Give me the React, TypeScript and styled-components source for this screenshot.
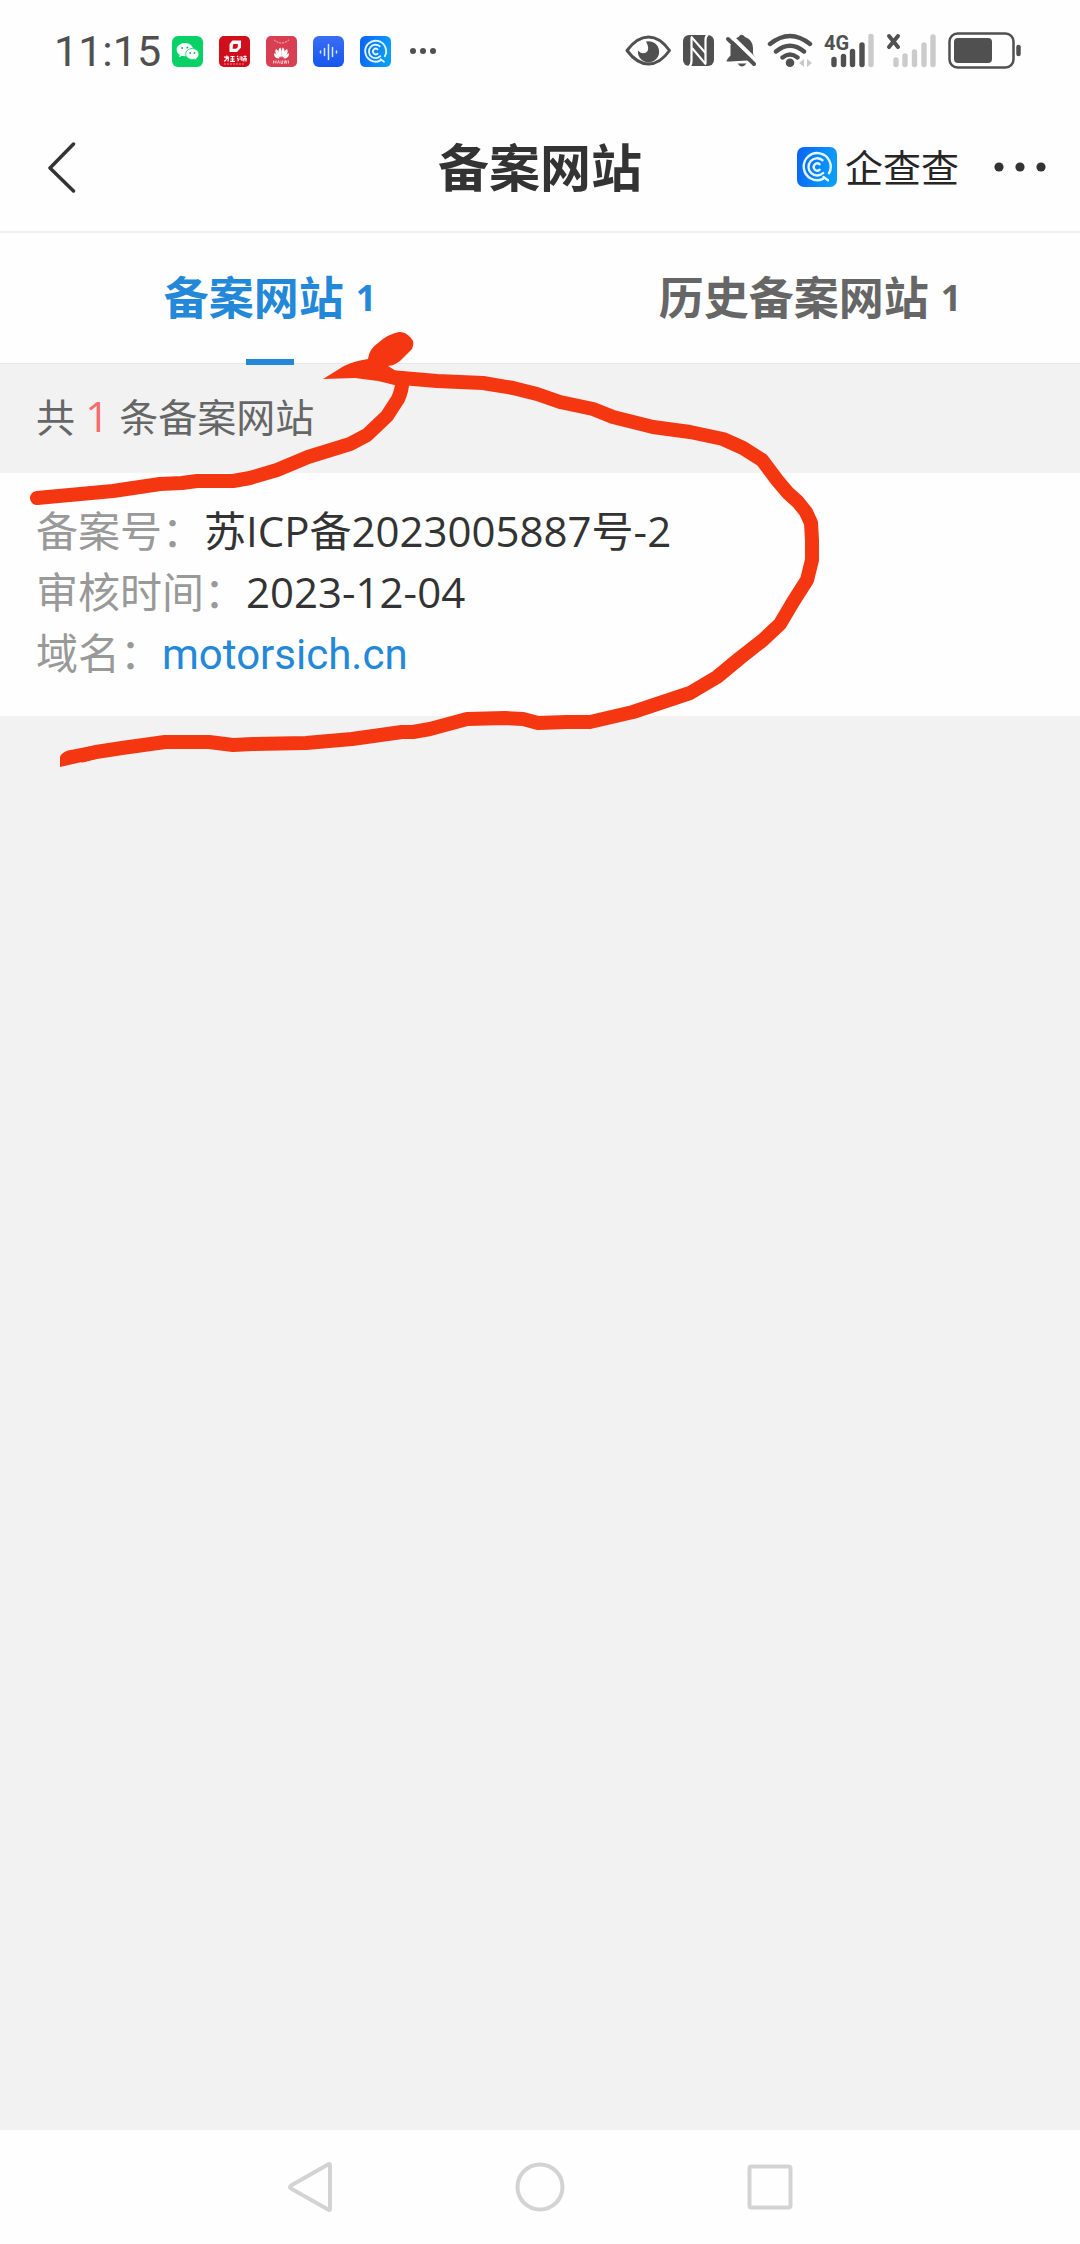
import React from "react";
import styled, { createGlobalStyle } from "styled-components";

const sans = '"Open Sans", "Noto Sans CJK SC", sans-serif';

const GlobalStyle = createGlobalStyle`
  * { box-sizing: border-box; }
  body { margin: 0; background: #f2f2f2; }
  button { margin: 0; padding: 0; border: 0; background: none; font: inherit; color: inherit; cursor: pointer; }
  svg { display: block; flex: none; }
`;

const Screen = styled.div`
  position: relative;
  display: flex;
  flex-direction: column;
  min-height: 100vh;
  overflow: hidden;
  background: #f2f2f2;
  color: #333;
  font-family: ${sans};
`;

const StatusBar = styled.div`
  display: flex;
  align-items: center;
  justify-content: space-between;
  height: 102px;
  padding: 0 58px 0 54px;
  background: #fefefe;
  color: #505050;
`;

const StatusGroup = styled.div`
  display: flex;
  align-items: center;
  gap: 16px;
`;

const Clock = styled.time`
  margin-right: -5px;
  font-family: Roboto, sans-serif;
  font-size: 43px;
  line-height: 52px;
`;

const Header = styled.header`
  display: grid;
  grid-template-columns: 1fr auto 1fr;
  align-items: center;
  height: 131px;
  padding: 0 33px;
  border-bottom: 2px solid #f0f0f0;
  background: #fefefe;
`;

const IconButton = styled.button`
  display: flex;
  align-items: center;
  justify-content: center;
  justify-self: start;
  height: 60px;
`;

const Title = styled.h1`
  margin: 0;
  font-size: 51px;
  line-height: 60px;
  font-weight: 700;
`;

const HeaderActions = styled.div`
  display: flex;
  align-items: center;
  justify-self: end;
  gap: 34px;
`;

const Brand = styled.div`
  display: flex;
  align-items: center;
  gap: 8px;
  font-size: 38px;
  line-height: 60px;
  color: #262626;
`;

const Tabs = styled.nav`
  display: grid;
  grid-template-columns: 1fr 1fr;
  height: 131px;
  border-bottom: 1px solid #e6e6e6;
  background: #fefefe;
`;

const Tab = styled.button<{ $active?: boolean }>`
  position: relative;
  display: flex;
  align-items: center;
  justify-content: center;
  gap: 12px;
  font-size: 45px;
  line-height: 60px;
  font-weight: 700;
  color: ${(p) => (p.$active ? "#2388d8" : "#666")};

  &::after {
    content: "";
    display: ${(p) => (p.$active ? "block" : "none")};
    position: absolute;
    left: 50%;
    bottom: -2px;
    width: 48px;
    height: 6px;
    margin-left: -24px;
    background: #2388d8;
  }
`;

const TabCount = styled.span`
  font-size: 36px;
`;

const Main = styled.main`
  flex: 1;
`;

const Summary = styled.p`
  margin: 0;
  padding: 22px 36px 26px;
  font-size: 39px;
  line-height: 61px;
  color: #666;
`;

const SummaryCount = styled.span`
  font-size: 42px;
  line-height: 1;
  color: #f56c6c;
`;

const Card = styled.dl`
  margin: 0;
  padding: 27px 36px 33px;
  background: #fefefe;
  font-size: 42px;
  line-height: 61px;
`;

const Row = styled.div`
  display: flex;
`;

const Label = styled.dt`
  color: #999;
`;

const Value = styled.dd`
  margin: 0;
`;

const DomainLink = styled.a`
  font-family: Roboto, sans-serif;
  line-height: 1;
  color: #2388d8;
  text-decoration: none;
`;

const NavBar = styled.nav`
  display: grid;
  grid-template-columns: repeat(3, 1fr);
  height: 114px;
  padding: 0 18%;
  background: #fefefe;
`;

const NavButton = styled.button`
  display: flex;
  align-items: center;
  justify-content: center;
`;

const Markup = styled.svg`
  position: absolute;
  left: 0;
  top: 320px;
  pointer-events: none;
`;

function QccLogo({ size, id }: { size: number; id: string }) {
  return (
    <svg width={size} height={size} viewBox="0 0 40 40">
      <defs>
        <linearGradient id={id} x1="0" y1="0" x2="1" y2="0.2">
          <stop offset="0" stopColor="#0a62f5" />
          <stop offset="1" stopColor="#0b9df8" />
        </linearGradient>
      </defs>
      <rect width="40" height="40" rx="7" fill={`url(#${id})`} />
      <g fill="none" stroke="#e4f5ff" strokeWidth="2.4" strokeLinecap="round">
        <path d="M26 31.800A13.500 13.500 0 1 1 32 26.200" />
        <path d="M26.200 26A8.600 8.600 0 1 1 25.500 13.200" />
        <path d="M22.600 22.800A3.600 3.600 0 1 1 22.600 17.200" />
        <path d="M26.500 30L31 33.200" />
      </g>
    </svg>
  );
}

function WeChatIcon() {
  return (
    <svg width="31" height="31" viewBox="0 0 31 31">
      <rect width="31" height="31" rx="6" fill="#08d166" />
      <path d="M13 7c-4.700 0-8.300 3-8.300 6.700 0 2.100 1.200 3.900 3 5.100l-.7 2.400 2.900-1.400c1 .3 2 .4 3.100.4 4.600 0 8.200-3 8.200-6.500S17.600 7 13 7z" fill="#fff" />
      <path d="M20.300 12.500c-3.700 0-6.600 2.500-6.600 5.500s2.900 5.500 6.600 5.500c.8 0 1.600-.1 2.300-.3l2.400 1.300-.6-2c1.600-1 2.600-2.600 2.600-4.500 0-3-3-5.500-6.700-5.500z" fill="#fff" stroke="#08d166" strokeWidth=".8" />
      <g fill="#08b458">
        <circle cx="10.200" cy="12" r="1" /><circle cx="15.400" cy="11.500" r="1" />
        <circle cx="18.200" cy="17" r=".9" /><circle cx="22.400" cy="17" r=".9" />
      </g>
    </svg>
  );
}

function RedAppIcon() {
  return (
    <svg width="31" height="31" viewBox="0 0 31 31">
      <rect width="31" height="31" rx="5" fill="#d10f1c" />
      <path d="M13.500 4.500h8.500v7l-4 4.500h-7.500V8z" fill="#fff" />
      <path d="M14.300 8h4.500v3.200l-1.800 1.600h-3.500z" fill="#d10f1c" />
      <path d="M5 21.200h5M8 19.500l-.5 2q0 3-2.500 3.800M7.500 22.300h2l-.5 3M11.500 20.500h4M13.500 20v5M11.500 23h4M11 25.300h5M18 20l1 1M18 22.500l1.200.2v2.500M20.500 21h2.500v4M20.300 23h2.500M24.300 20.500h3.200M26 19.500v3M24 22.800h4M24.800 23.500v2M27 23.500v2" stroke="#fff" strokeWidth="1.200" fill="none" />
      <path d="M5 28h21" stroke="#f2a0a5" strokeWidth=".8" strokeDasharray="2 1" />
    </svg>
  );
}

function FlowerAppIcon() {
  return (
    <svg width="31" height="31" viewBox="0 0 31 31">
      <rect width="31" height="31" rx="5" fill="#d93f52" />
      <path d="M8 3.800q7.500 6.500 15 0" fill="none" stroke="#f6bcc4" strokeWidth="1" strokeDasharray="2 1" />
      <g fill="#fff">
        <path d="M15.200 21.500c-3-3-4-7.500-1-10 1.600 2 1.600 6.500 1 10z" />
        <path d="M15.800 21.500c3-3 4-7.500 1-10-1.600 2-1.600 6.500-1 10z" />
        <path d="M14.300 21.500c-4.300-1.700-6-5.500-4.300-8.500 2.800 1.500 4.300 5 4.300 8.500zM16.700 21.500c4.300-1.700 6-5.500 4.300-8.500-2.800 1.500-4.300 5-4.300 8.500z" />
        <path d="M13.600 22.300c-3.500.6-5.800-1.500-5.600-5 2.600.5 4.800 2.500 5.600 5zM17.400 22.300c3.500.6 5.800-1.500 5.600-5-2.600.5-4.800 2.500-5.600 5z" />
      </g>
      <path d="M7.500 24.500v3M10 24.500v3M7.500 26H10M11.500 27.500l1-3 1 3M15 24.500v3h1.500v-3M18 24.500l.7 3 .8-3 .8 3 .7-3M22.500 24.500v3" stroke="#fbd9dd" strokeWidth=".8" fill="none" />
    </svg>
  );
}

function VoiceAppIcon() {
  return (
    <svg width="31" height="31" viewBox="0 0 31 31">
      <defs>
        <linearGradient id="voice" x1="0" y1="0" x2="0" y2="1">
          <stop offset="0" stopColor="#3a6df5" />
          <stop offset="1" stopColor="#1557ee" />
        </linearGradient>
      </defs>
      <rect width="31" height="31" rx="6" fill="url(#voice)" />
      <path d="M7.500 15v2M11.500 12.500v7M15.500 8.500v15M19.500 11.500v9M23.500 15v2" stroke="#dbe8ff" strokeWidth="1.500" strokeLinecap="round" />
    </svg>
  );
}

function Dots({ width, r, gap, color }: { width: number; r: number; gap: number; color: string }) {
  const c = width / 2;
  return (
    <svg width={width} height="12" viewBox={`0 0 ${width} 12`} fill={color}>
      <circle cx={c - gap} cy="6" r={r} />
      <circle cx={c} cy="6" r={r} />
      <circle cx={c + gap} cy="6" r={r} />
    </svg>
  );
}

/* The group of system indicators on the right of the status bar. */
function SystemIcons() {
  return (
    <svg width="398" height="40" viewBox="624 31 398 40" fill="none" stroke="#505050" role="img" aria-label="4G">
      <path d="M627 50.500Q637 37 648.500 37T669.500 50.500Q660 64 648.500 64T627 50.500z" strokeWidth="3" strokeLinejoin="round" />
      <path d="M646 41.500A10.600 10.600 0 1 1 638 50.500Q641 54.500 646 52.500 650.500 49.500 646 41.500z" fill="#505050" stroke="none" />

      <rect x="683" y="35" width="31" height="31" rx="6" fill="#505050" stroke="none" />
      <path d="M691.500 38V61Q691.500 65 689 66.500M705.500 63V40Q705.500 36 708 34.500" stroke="#fff" strokeWidth="2.200" />
      <path d="M691 36.500L705.500 53M692 48L706 64.500" stroke="#fff" strokeWidth="2" />

      <g fill="#505050" stroke="none">
        <path d="M730.500 45.500Q734 38 738.500 37q3-4.500 6.500 0 8 3 8 11v6q3 3 3 6l-26 1.500h-3.500q0-2 4-6z" />
        <path d="M737.500 63.500h9q-4.500 6-9 0z" />
      </g>
      <path d="M731 36l27 26.500" stroke="#fefefe" strokeWidth="4" />
      <path d="M728 39l26 25" strokeWidth="4" strokeLinecap="round" />

      <g strokeWidth="4.400" strokeLinecap="round">
        <path d="M770 44Q790 28 810 44M776 51.500Q790 40 804 51.500M782.500 57.500Q790 51.500 797.500 57.500" />
      </g>
      <circle cx="790" cy="62.800" r="4.300" fill="#505050" stroke="none" />
      <path d="M804 59v8l-5-4zM807 59v8l5-4z" fill="#c9c9c9" stroke="none" />

      <text x="824" y="50" fill="#505050" stroke="none" fontFamily="Roboto, sans-serif" fontSize="20" fontWeight="700">4G</text>
      <g strokeWidth="5.400" strokeLinecap="round">
        <path d="M834 59.500v5M843.500 56.500v8M852.500 51.500v13M862 45v19.500" />
        <path d="M871 36.500v28" stroke="#cbcbcb" />
      </g>

      <path d="M889 36l9 11M898 36l-9 11" strokeWidth="4" strokeLinecap="round" />
      <path d="M896 60v4.500M905 56v8.500M914.500 52v12.500M924 45v19.500M933 37v27.500" stroke="#cbcbcb" strokeWidth="5.400" strokeLinecap="round" />

      <rect x="949.500" y="33.500" width="64" height="34" rx="8" strokeWidth="2.500" />
      <rect x="954" y="38" width="38" height="25" rx="4" fill="#505050" stroke="none" />
      <path d="M1018.500 47v7" strokeWidth="4.500" strokeLinecap="round" />
    </svg>
  );
}

function HandDrawnLoop() {
  return (
    <Markup width="840" height="460" viewBox="0 320 840 460" aria-hidden="true">
      <g fill="none" stroke="#f53711" strokeWidth="14" strokeLinejoin="round">
        <path strokeLinecap="round" d="M37 498L113 491L160 484L182 483L197 481L233 481L250 478L277 470L308 457L350 444L367 435L387 416L398 399Q403 388 402 378" />
        <path d="M390 377L437 381L483 383L513 388L537 394L560 402L593 409L613 417L653 427L690 432L723 439L743 448L762 460L777 480L788 493L798 502L806 512L811 523L812 540L812 560L807 580L793 602L780 624L763 640L740 658L717 677L690 693L660 703L633 712L590 722L567 722L538 723L523 719L505 718L467 719L430 729L413 732L402 732L352 739L329 741L306 743L253 744L233 745L209 742L165 742L122 748L96 752L80 756" />
      </g>
      <path fill="#f53711" d="M60 767V757Q61 753 68 750.500L94 745.500L96 759L82 762zM323 379L344 366Q354 361 368 359Q369 349 378 343Q388 334 399 332Q405 331 411 338Q415 342 412 349L403 358Q397 365 388 366L396 371L402 388L395 385L378 381L355 378z" />
    </Markup>
  );
}

export default function App() {
  return (
    <Screen>
      <GlobalStyle />
      <StatusBar>
        <StatusGroup>
          <Clock>11:15</Clock>
          <WeChatIcon />
          <RedAppIcon />
          <FlowerAppIcon />
          <VoiceAppIcon />
          <QccLogo size={31} id="qccSmall" />
          <Dots width={32} r={3} gap={10} color="#505050" />
        </StatusGroup>
        <SystemIcons />
      </StatusBar>

      <Header>
        <IconButton aria-label="返回">
          <svg width="58" height="52" viewBox="0 0 58 52">
            <path d="M40.500 3L17 27l23.500 23" fill="none" stroke="#333" strokeWidth="3.500" strokeLinecap="round" strokeLinejoin="round" />
          </svg>
        </IconButton>
        <Title>备案网站</Title>
        <HeaderActions>
          <Brand>
            <QccLogo size={40} id="qccLarge" />
            <span>企查查</span>
          </Brand>
          <IconButton aria-label="更多">
            <Dots width={54} r={4.6} gap={21} color="#333" />
          </IconButton>
        </HeaderActions>
      </Header>

      <Tabs>
        <Tab $active aria-current="page">
          备案网站<TabCount>1</TabCount>
        </Tab>
        <Tab>
          历史备案网站<TabCount>1</TabCount>
        </Tab>
      </Tabs>

      <Main>
        <Summary>
          共 <SummaryCount>1</SummaryCount> 条备案网站
        </Summary>
        <Card>
          <Row>
            <Label>备案号：</Label>
            <Value>苏ICP备2023005887号-2</Value>
          </Row>
          <Row>
            <Label>审核时间：</Label>
            <Value>2023-12-04</Value>
          </Row>
          <Row>
            <Label>域名：</Label>
            <Value>
              <DomainLink href="#domain">motorsich.cn</DomainLink>
            </Value>
          </Row>
        </Card>
      </Main>

      <NavBar>
        <NavButton aria-label="后退">
          <svg width="50" height="54" viewBox="0 0 50 54">
            <path d="M43 4.500Q45 3 45 5.500v43Q45 51 43 49.500L6 28.500Q4 27 6 25.500z" fill="none" stroke="#d3d3d3" strokeWidth="4" strokeLinejoin="round" />
          </svg>
        </NavButton>
        <NavButton aria-label="主屏幕">
          <svg width="50" height="50" viewBox="0 0 50 50">
            <circle cx="25" cy="25" r="22.500" fill="none" stroke="#d3d3d3" strokeWidth="4" />
          </svg>
        </NavButton>
        <NavButton aria-label="最近任务">
          <svg width="46" height="46" viewBox="0 0 46 46">
            <rect x="2.500" y="2.500" width="41" height="41" rx="2" fill="none" stroke="#d3d3d3" strokeWidth="4" />
          </svg>
        </NavButton>
      </NavBar>
      <HandDrawnLoop />
    </Screen>
  );
}
